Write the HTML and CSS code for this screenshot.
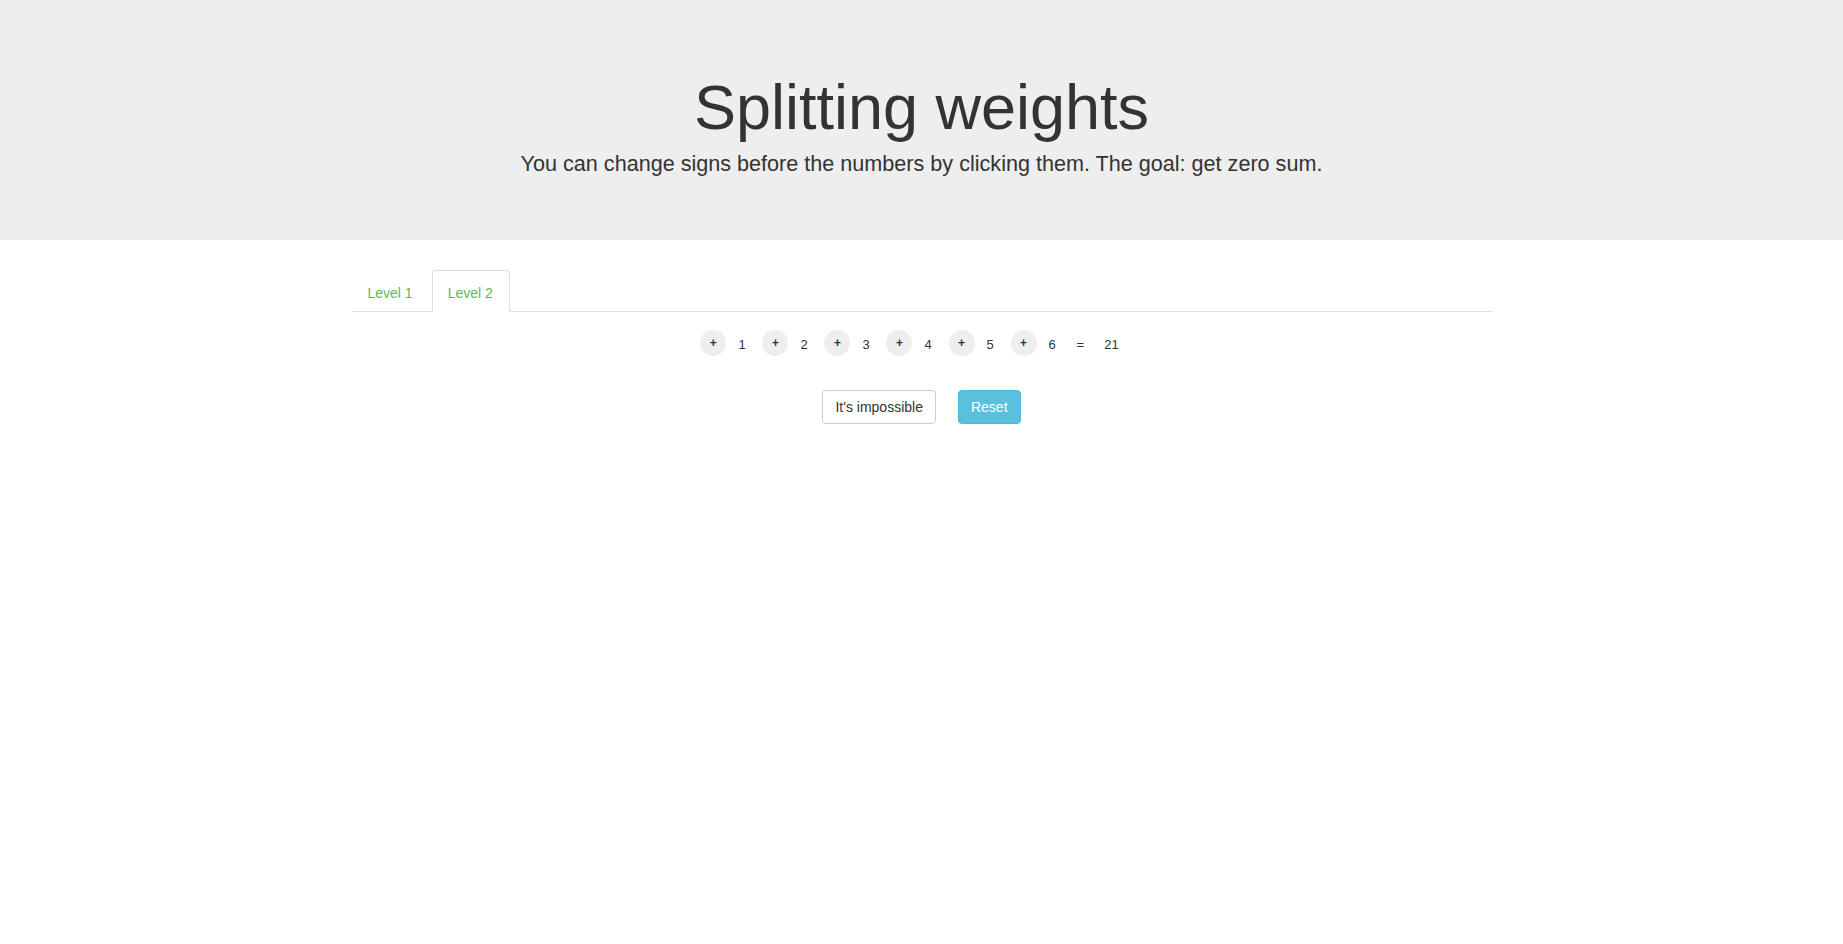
FILE: index.html
```html
<!DOCTYPE html>
<html>
<head>
<meta charset="utf-8">
<title>Splitting weights</title>
<link rel="stylesheet" href="styles.css">
</head>
<body>
<header class="jumbotron">
  <div class="container">
    <h1>Splitting weights</h1>
    <p>You can change signs before the numbers by clicking them. The goal: get zero sum.</p>
  </div>
</header>
<main class="container">
  <ul class="tabs">
    <li class="tab"><a href="#">Level 1</a></li>
    <li class="tab active"><a href="#">Level 2</a></li>
  </ul>
  <div class="equation">
    <span class="sign">+</span><span class="num">1</span>
    <span class="sign">+</span><span class="num">2</span>
    <span class="sign">+</span><span class="num">3</span>
    <span class="sign">+</span><span class="num">4</span>
    <span class="sign">+</span><span class="num">5</span>
    <span class="sign">+</span><span class="num">6</span>
    <span class="eq">=</span><span class="total">21</span>
  </div>
  <div class="actions">
    <button class="btn btn-default">It's impossible</button>
    <button class="btn btn-info">Reset</button>
  </div>
</main>
</body>
</html>
```

FILE: styles.css
```css
* { box-sizing: border-box; }
html, body { margin: 0; padding: 0; }
body {
  font-family: "Liberation Sans", Arial, Helvetica, sans-serif;
  font-size: 14px;
  line-height: 1.42857;
  color: #333;
  background: #fff;
}
.container {
  width: 1170px;
  margin: 0 auto;
  padding: 0 15px;
}
.jumbotron {
  background: #eee;
  padding: 48px 0;
  margin-bottom: 30px;
  text-align: center;
}
.jumbotron h1 {
  font-size: 63px;
  font-weight: 400;
  line-height: 1.1;
  margin: 25px 0 7px;
  color: #333;
}
.jumbotron p {
  font-size: 21.6px;
  font-weight: 200;
  margin: 0 0 13px;
  line-height: 30px;
}
.tabs {
  list-style: none;
  margin: 0;
  padding: 0;
  display: flex;
  border-bottom: 1px solid #ddd;
}
.tab {
  margin-bottom: -1px;
}
.tab a {
  display: block;
  padding: 12px 15px 8px;
  margin-right: 3px;
  line-height: 20px;
  border: 1px solid transparent;
  border-radius: 4px 4px 0 0;
  color: #5cb85c;
  text-decoration: none;
}
.tab.active a {
  border-color: #ddd #ddd transparent;
  background: #fff;
  padding-right: 16px;
}
.equation {
  display: flex;
  justify-content: center;
  align-items: center;
  margin-top: 18px;
  padding-right: 24px;
  font-size: 13px;
  height: 26px;
}
.sign {
  width: 26px;
  height: 26px;
  border-radius: 50%;
  background: #eee;
  font-weight: bold;
  font-size: 12px;
  display: flex;
  align-items: center;
  justify-content: center;
  color: #333;
  cursor: pointer;
}
.num {
  margin: 3px 16.8px 0 12px;
}
.eq {
  margin: 3px 20px 0 4px;
}
.total {
  margin-top: 3px;
}
.actions {
  display: flex;
  justify-content: center;
  gap: 22px;
  margin-top: 34px;
}
.btn {
  font-family: inherit;
  font-size: 14px;
  line-height: 20px;
  padding: 6px 12px;
  border: 1px solid #ccc;
  border-radius: 4px;
  background: #fff;
  color: #333;
  cursor: pointer;
}
.btn-info {
  background: #5bc0de;
  border-color: #46b8da;
  color: #fff;
}
```
